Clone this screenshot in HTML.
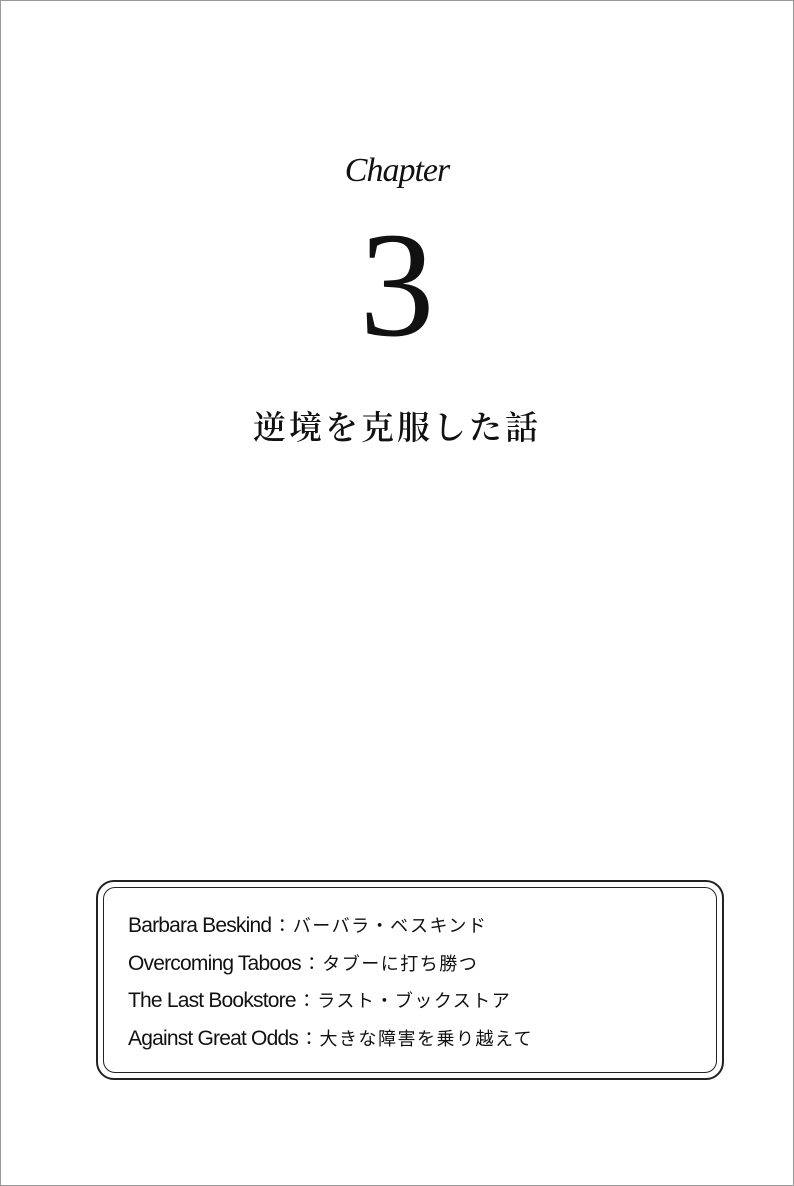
<!DOCTYPE html>
<html><head><meta charset="utf-8"><style>
html,body{margin:0;padding:0;background:#fff}
body{width:794px;height:1186px;position:relative;overflow:hidden}
.frame{position:absolute;left:0;top:0;width:792px;height:1184px;border:1px solid #999}
.chap{position:absolute;left:0;width:794px;top:152px;text-align:center;font-family:"Liberation Serif",serif;font-style:italic;font-size:34px;color:#111;letter-spacing:-1px}
.num{position:absolute;left:0;width:794px;top:205px;text-align:center;font-family:"Liberation Serif",serif;font-size:150px;line-height:160px;color:#111;font-weight:normal}
.title{position:absolute;left:0;width:794px;top:402px;text-align:center;font-family:"Noto Serif CJK SC","Noto Sans CJK JP",serif;font-size:33px;font-weight:600;letter-spacing:3px;color:#111}
.box1{position:absolute;left:96px;top:880px;width:624px;height:196px;border:2px solid #222;border-radius:18px}
.box2{position:absolute;left:103px;top:887px;width:612px;height:184px;border:1px solid #222;border-radius:12px}
.lines{position:absolute;left:128px;top:911px;font-family:"Liberation Sans","Noto Sans CJK JP",sans-serif;font-size:21px;letter-spacing:-0.8px;color:#111}
.lines div{height:37.5px;line-height:28px;white-space:nowrap}
.lines span{font-family:"Noto Sans CJK JP",sans-serif;font-size:18px;letter-spacing:1.5px;margin-left:2px}
</style></head><body>
<div class="frame"></div>
<div class="chap">Chapter</div>
<div class="num">3</div>
<div class="title">逆境を克服した話</div>
<div class="box1"></div>
<div class="box2"></div>
<div class="lines">
<div>Barbara Beskind<span>：バーバラ・ベスキンド</span></div>
<div>Overcoming Taboos<span>：タブーに打ち勝つ</span></div>
<div>The Last Bookstore<span>：ラスト・ブックストア</span></div>
<div>Against Great Odds<span>：大きな障害を乗り越えて</span></div>
</div>
</body></html>
